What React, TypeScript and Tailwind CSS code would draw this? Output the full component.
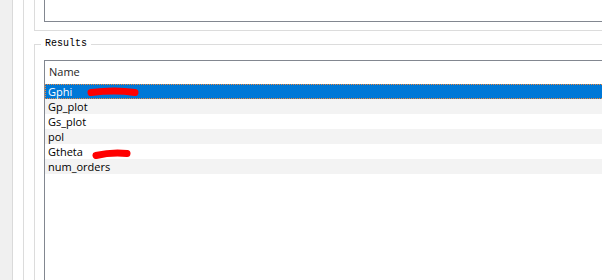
import React from 'react';

const rows = ['Gphi', 'Gp_plot', 'Gs_plot', 'pol', 'Gtheta', 'num_orders'];

function Scribble({ d }: { d: string }) {
  return (
    <svg className="pointer-events-none absolute left-0 top-0" width="200" height="15" viewBox="0 0 200 15">
      <path d={d} stroke="#ff0000" strokeWidth="7" strokeLinecap="round" fill="none" />
    </svg>
  );
}

export default function App() {
  return (
    <div className="flex h-[280px] w-[602px] overflow-hidden bg-white font-['Open_Sans',sans-serif] text-[11px] text-black">
      <div className="w-[12px] shrink-0 bg-[#f0f0f0]" />
      <div className="flex-1 border-l border-[#dadada] pl-[10px]">
        <div className="h-full border-l border-[#dcdcdc] pl-[10px]">
          {/* previous group */}
          <div className="border-b border-l border-[#dcdcdc] pb-[8px] pl-[9px]">
            <div className="h-[22px] border-b border-l border-[#828790] bg-white" />
          </div>

          <fieldset className="mt-[7px] border-l border-t border-[#dcdcdc] pl-[6px]">
            <legend className="px-[4px] font-['Liberation_Mono',monospace] text-[10px] leading-[12px] text-black">
              Results
            </legend>
            <div className="ml-[3px] mt-[10px] h-[240px] border-l border-t border-[#828790]">
              <div className="flex h-[23px] items-center pl-[4px] text-[#1e1e1e]">Name</div>
              {rows.map((r, i) =>
                i === 0 ? (
                  <div
                    key={r}
                    className="relative h-[15px] border-y border-l border-dotted border-[#f0883a] bg-[#0078d7] pl-[2px] leading-[13px] text-white"
                  >
                    {r}
                    <div className="absolute left-[-1px] top-[-1px]">
                      <Scribble d="M46 8.5 Q70 5.5 90 8.5" />
                    </div>
                  </div>
                ) : (
                  <div
                    key={r}
                    className={`relative h-[15px] pl-[3px] leading-[15px] ${i % 2 === 1 ? 'bg-[#f3f3f3]' : 'bg-white'}`}
                  >
                    {r}
                    {r === 'Gtheta' && <Scribble d="M51 11.5 Q66 8 82 9.5" />}
                  </div>
                )
              )}
            </div>
          </fieldset>
        </div>
      </div>
    </div>
  );
}
